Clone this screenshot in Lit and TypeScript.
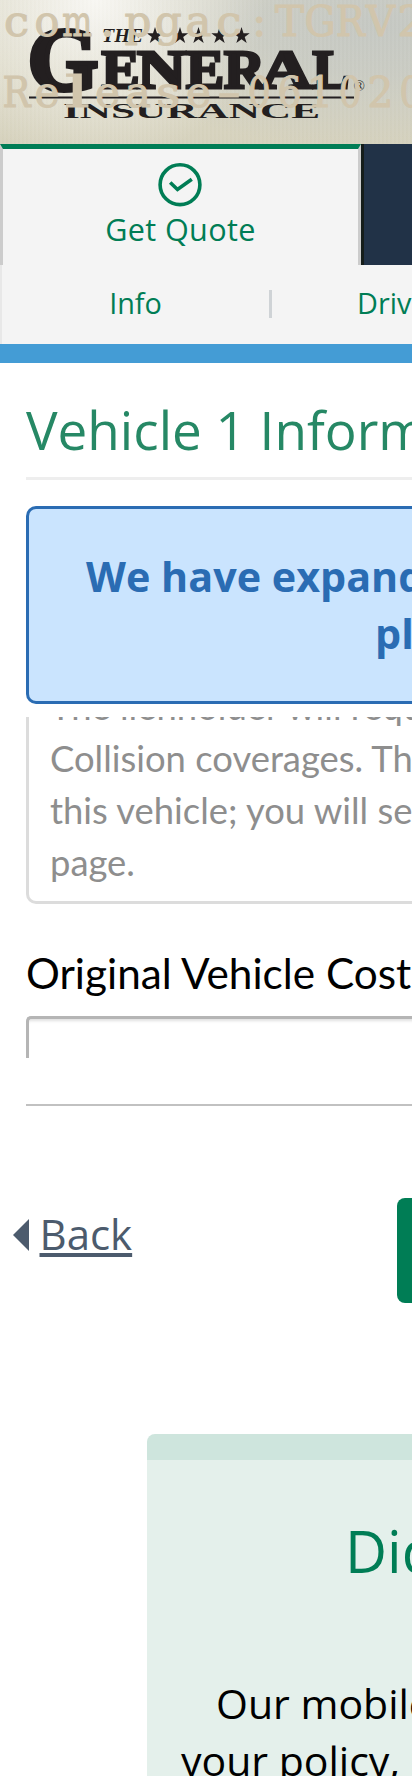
import { LitElement, html, css, svg } from "lit";
import { customElement } from "lit/decorators.js";

const star = (x: number) => svg`<path transform="translate(${x} 35.5)" d="M0-8.500 2-2.200 8.200-2.200 3.200 1.400 5.200 7.500 0 3.800-5.200 7.500-3.200 1.400-8.200-2.200-2-2.200Z"/>`;

// [character, width it occupies inside its fixed cell]
type Cell = [string, number];
const LINE1: Cell[] = [["c", 25], ["o", 25], ["m", 30], [".", 14], ["p", 27], ["g", 27], ["a", 26], ["c", 25], [":", 14], ["T", 29], ["G", 31], ["R", 29], ["V", 29], ["2", 27]];
const LINE2: Cell[] = [["R", 28], ["e", 25], ["l", 25], ["e", 25], ["a", 26], ["s", 24], ["e", 25], ["-", 24], ["0", 23], ["6", 24], ["1", 27], ["0", 23], ["2", 26], ["0", 23]];
const stamp = (cells: Cell[], y: number) => svg`<text y=${y}>${cells.map(([c, w], i) =>
  svg`<tspan x=${16.6 + i * 30.33 - w / 2} textLength=${w} lengthAdjust="spacingAndGlyphs">${c}</tspan>`)}</text>`;

// [letter, left edge, width] of the wordmark
const LETTERS: [string, number, number][] = [["E", 101.5, 38], ["N", 137, 49], ["E", 186, 38], ["R", 224, 41], ["A", 260, 52], ["L", 312.5, 37]];

@customElement("app-root")
export class AppRoot extends LitElement {
  static styles = css`
    :host { display: block; width: 412px; height: 1776px; overflow: hidden; background: #fff; font-family: "Open Sans", sans-serif; color: #000; }
    * { box-sizing: border-box; }
    .info, .title, .alert, .note, .label, .card { white-space: nowrap; }
    .header { height: 144px; background:
      repeating-linear-gradient(90deg, rgba(255,255,255,.03) 0 2px, rgba(120,110,70,.012) 2px 4px),
      radial-gradient(ellipse 170px 165px at 95px 0, rgba(248,247,243,1), rgba(240,239,232,.6) 50%, rgba(240,239,232,0)),
      radial-gradient(ellipse 300px 125px at 380px 25px, #c5c8c3, rgba(198,201,195,.8) 40%, rgba(198,201,195,0)),
      linear-gradient(#dfdccb, #d6d2bd); }
    .header svg { display: block; }
    .mark { fill: #231f20; font-family: "Liberation Serif", serif; font-weight: 700; }
    .heavy { stroke: #231f20; stroke-width: 3; }
    .initial { stroke: #231f20; stroke-width: 5; }
    .stamp { fill: #d1c5ac; stroke: #d1c5ac; stroke-width: 1.1; font: 42.5px "DejaVu Serif", serif; }
    .tabs { display: flex; height: 121px; }
    .tab { flex: none; width: 361px; border: 3px solid #ccc; border-top: 5px solid #007d55; border-bottom: 0; background: #f4f4f4; color: #007d55; display: flex; flex-direction: column; align-items: center; padding-top: 14px; font-size: 30.6px; line-height: 41px; letter-spacing: .35px; gap: 2px; }
    .tab svg { margin-right: 1px; }
    .next { flex: 1; background: #213247; border-left: 3px solid #151d1a; }
    .sub { display: flex; height: 79px; background: #f4f4f4; border-left: 2px solid #e8e8e8; color: #007d55; font-size: 28.8px; line-height: 76px; overflow: hidden; }
    .info { flex: none; width: 267px; text-align: center; }
    .rule { flex: none; width: 3px; height: 28px; margin-top: 25px; background: #cfd3d6; }
    .drivers { padding-left: 85px; }
    .band { height: 19px; background: #449cd5; }
    .content { padding-left: 26px; width: 412px; }
    .title { margin: 0; padding-top: 20px; height: 117px; border-bottom: 3px solid #eee; font-size: 53px; line-height: 93px; font-weight: 400; color: #268865; }
    .alert { margin-top: 26px; height: 198px; border: 3px solid #2a6cb3; border-right: 0; border-radius: 10px 0 0 10px; background: #cae4fe; color: #2a6cb3; font-weight: 700; font-size: 41.3px; line-height: 57px; padding: 39px 0 0 57px; overflow: hidden; }
    .alert .second { padding-left: 289px; }
    .clip { margin-top: 13px; height: 187px; overflow: hidden; }
    .note { margin-top: -37px; height: 224px; border: 3px solid #dcdcdc; border-right: 0; border-top: 0; border-radius: 0 0 0 10px; padding-left: 21px; font: 36.4px/52px Lato, sans-serif; color: #8e8e8e; }
    .label { margin-top: 44px; height: 68px; font: 42.3px/50px Lato, sans-serif; }
    .input { height: 42px; margin-right: -10px; border: 3px solid #b5b5b5; border-right: 0; border-bottom: 0; border-radius: 5px 0 0 0; box-shadow: inset 0 4px 3px -2px rgba(0,0,0,.12); }
    .hr { margin-top: 46px; height: 2px; background: #c1c1c1; }
    .actions { display: flex; justify-content: space-between; height: 105px; margin-top: 92px; padding-left: 13px; }
    .back { display: flex; align-items: flex-start; gap: 10.500px; color: #4c5b6d; font-size: 42px; line-height: 60px; padding-top: 6px; }
    .back svg { margin-top: 15px; }
    .link { text-decoration: underline; text-decoration-thickness: 4px; text-underline-offset: 3px; text-decoration-skip-ink: none; }
    .button { width: 15px; background: #007d55; border-radius: 8px 0 0 8px; }
    .card { margin: 131px 0 0 147px; height: 342px; border-radius: 8px 0 0 0; border-top: 26px solid #cee5dd; background: #e4f0eb; overflow: hidden; padding-top: 51px; }
    .card h2 { margin: 0; font-weight: 400; font-size: 58px; line-height: 80px; color: #007d55; padding-left: 198px; }
    .card p { margin: 84px 0 0; font-size: 41px; line-height: 57px; padding-left: 34px; }
    .card .first { padding-left: 35px; }
  `;

  render() {
    return html`
      <header class="header">
        <svg width="412" height="144" viewBox="0 0 412 144">
          <g class="mark">
            <text class="initial" x="28" y="88.500" font-size="89" textLength="70" lengthAdjust="spacingAndGlyphs">G</text>
            <text x="102" y="42" font-size="19" font-style="italic" textLength="41" lengthAdjust="spacingAndGlyphs">THE</text>
            ${[155, 180, 198.5, 219.5, 241.5].map(star)}
            <text class="heavy" y="87.700" font-size="55">${LETTERS.map(([c, x, w]) => svg`<tspan x=${x} textLength=${w} lengthAdjust="spacingAndGlyphs">${c}</tspan>`)}</text>
            <text x="353.500" y="91" font-size="15" font-weight="400">®</text>
            <rect x="29" y="96.500" width="325" height="2"/>
            <text x="63" y="117.500" font-size="21" textLength="257" lengthAdjust="spacingAndGlyphs">INSURANCE</text>
          </g>
          <g class="stamp">${stamp(LINE1, 35.5)}${stamp(LINE2, 106.5)}</g>
        </svg>
      </header>
      <nav class="tabs">
        <div class="tab">
          <svg width="44" height="44" viewBox="0 0 44 44" fill="none" stroke="#007d55" stroke-width="3.600">
            <circle cx="22" cy="21.700" r="19.900"/><path d="M12.200 19.500 19.500 26.500 33.800 16.300"/>
          </svg>
          <span>Get Quote</span>
        </div>
        <div class="next"></div>
      </nav>
      <nav class="sub"><span class="info">Info</span><span class="rule"></span><span class="drivers">Drivers</span></nav>
      <div class="band"></div>
      <main class="content">
        <h1 class="title">Vehicle 1 Information</h1>
        <div class="alert"><div>We have expanded</div><div class="second">please</div></div>
        <div class="clip"><div class="note">The lienholder will require<br>Collision coverages. The<br>this vehicle; you will see<br>page.</div></div>
        <div class="label">Original Vehicle Cost</div>
        <div class="input"></div>
        <div class="hr"></div>
      </main>
      <div class="actions">
        <span class="back"><svg width="16" height="32" viewBox="0 0 16 32"><path d="M0 16 16 0V32Z" fill="#4c5b6d"/></svg><span class="link">Back</span></span>
        <span class="button"></span>
      </div>
      <section class="card">
        <h2>Did you know</h2>
        <p><span class="first">Our mobile app</span><br>your policy, pay</p>
      </section>`;
  }
}
